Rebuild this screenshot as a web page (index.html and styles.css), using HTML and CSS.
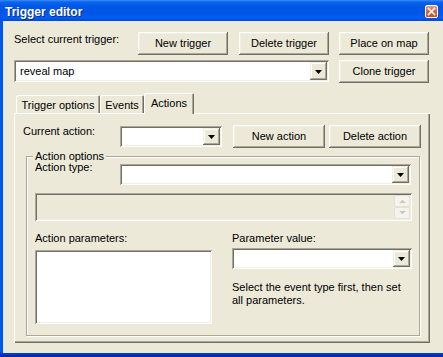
FILE: index.html
```html
<!DOCTYPE html>
<html>
<head>
<meta charset="utf-8">
<link rel="stylesheet" href="styles.css">
</head>
<body>
<div class="window">
  <div class="titlebar">
    <span class="title">Trigger editor</span>
    <span class="close">
      <svg width="11" height="11" viewBox="0 0 11 11"><path d="M2.5 2.5 L8.5 8.5 M8.5 2.5 L2.5 8.5" stroke="#fff" stroke-width="1.6" stroke-linecap="square"/></svg>
    </span>
  </div>
  <div class="client">
    <div class="row row1">
      <span class="label lbl-trigger">Select current trigger:</span>
      <button class="btn btn-90">New trigger</button>
      <button class="btn btn-90 gap11">Delete trigger</button>
      <button class="btn btn-90 gap10">Place on map</button>
    </div>
    <div class="row row2">
      <div class="combo combo-trigger">
        <span class="val">reveal map</span>
        <span class="drop"><svg width="7" height="4" viewBox="0 0 7 4"><path d="M0 0H7L3.5 4Z" fill="#000"/></svg></span>
      </div>
      <button class="btn btn-90 gap10">Clone trigger</button>
    </div>
    <div class="tabs">
      <div class="tab tab1">Trigger options</div>
      <div class="tab tab2">Events</div>
      <div class="tab tab3 active">Actions</div>
    </div>
    <div class="panel">
      <div class="row prow">
        <span class="label lbl-action">Current action:</span>
        <div class="combo combo-action">
          <span class="val"></span>
          <span class="drop"><svg width="7" height="4" viewBox="0 0 7 4"><path d="M0 0H7L3.5 4Z" fill="#000"/></svg></span>
        </div>
        <button class="btn btn-92 gap11">New action</button>
        <button class="btn btn-92 gap4">Delete action</button>
      </div>
      <fieldset class="group">
        <legend>Action options</legend>
        <div class="row grow">
          <span class="label lbl-type">Action type:</span>
          <div class="combo combo-type">
            <span class="val"></span>
            <span class="drop"><svg width="7" height="4" viewBox="0 0 7 4"><path d="M0 0H7L3.5 4Z" fill="#000"/></svg></span>
          </div>
        </div>
        <div class="textbox">
          <div class="spin">
            <span class="spinbtn"><svg width="7" height="4" viewBox="0 0 7 4"><path d="M0 4H7L3.5 1Z" fill="#C9C6B8"/></svg></span>
            <span class="spinbtn"><svg width="7" height="4" viewBox="0 0 7 4"><path d="M0 0H7L3.5 3Z" fill="#C9C6B8"/></svg></span>
          </div>
        </div>
        <div class="cols">
          <div class="col col-left">
            <div class="label">Action parameters:</div>
            <div class="listbox"></div>
          </div>
          <div class="col col-right">
            <div class="label">Parameter value:</div>
            <div class="combo combo-param">
              <span class="val"></span>
              <span class="drop"><svg width="7" height="4" viewBox="0 0 7 4"><path d="M0 0H7L3.5 4Z" fill="#000"/></svg></span>
            </div>
            <div class="help">Select the event type first, then set<br>all parameters.</div>
          </div>
        </div>
      </fieldset>
    </div>
  </div>
</div>
</body>
</html>
```

FILE: styles.css
```css
html, body {
  margin: 0;
  padding: 0;
  background: #0055E5;
}

.window {
  width: 443px;
  height: 357px;
  display: flex;
  flex-direction: column;
  background: linear-gradient(to bottom, #0058E8 0, #0058E8 352px, #0040D0 353px, #0033C0 355px, #00229E 357px);
  font-family: "Liberation Sans", Arial, sans-serif;
  font-size: 11px;
  color: #000;
  overflow: hidden;
}

.titlebar {
  height: 21px;
  flex: none;
  display: flex;
  align-items: flex-start;
  justify-content: space-between;
  background: linear-gradient(to bottom, #3D8DF5 0, #0A64EC 2px, #0057E6 6px, #0055E4 13px, #005EF2 17px, #0058EA 19px, #0044D4 21px);
}

.title {
  color: #fff;
  font-weight: bold;
  font-size: 12px;
  line-height: 14px;
  padding: 5px 0 0 5px;
  text-shadow: 1px 1px 0 #0A2F8A;
}

.close {
  width: 13px;
  height: 13px;
  box-sizing: border-box;
  margin: 5px 5px 0 0;
  border: 1px solid #fff;
  border-radius: 2px;
  background: linear-gradient(to bottom, #EC9A7E 0, #E2643F 45%, #D24A22 100%);
  display: flex;
  align-items: center;
  justify-content: center;
}

.close svg {
  display: block;
}

.client {
  flex: 1;
  margin: 0 0 4px 3px;
  background: #ECE9D8;
  padding: 11px 0 0 11px;
  box-shadow: inset 1px 0 #D9E4FA;
}

.row {
  display: flex;
  align-items: flex-start;
}

.label {
  line-height: 13px;
  white-space: nowrap;
}

.lbl-trigger {
  width: 124px;
  margin-top: 1px;
}

.btn {
  height: 23px;
  padding: 0;
  margin: 0;
  border: none;
  background: #ECE9D8;
  font-family: "Liberation Sans", Arial, sans-serif;
  font-size: 11px;
  color: #000;
  line-height: 13px;
  box-shadow: inset -1px -1px #716F64, inset 1px 1px #FFFFFF, inset -2px -2px #ACA899, inset 2px 2px #F1EFE2;
}

.btn-90 { width: 90px; }
.btn-92 { width: 92px; }
.gap11 { margin-left: 11px; }
.gap10 { margin-left: 10px; }
.gap4 { margin-left: 4px; }

.row2 {
  margin-top: 5px;
}

.combo {
  display: flex;
  background: #fff;
  box-sizing: border-box;
  height: 21px;
  padding: 2px;
  box-shadow: inset 1px 1px #ACA899, inset -1px -1px #FFFFFF, inset 2px 2px #716F64, inset -2px -2px #F1EFE2;
}

.combo .val {
  flex: 1;
  padding-left: 4px;
  line-height: 17px;
}

.combo .drop {
  width: 17px;
  flex: none;
  background: #ECE9D8;
  display: flex;
  align-items: center;
  justify-content: center;
  box-shadow: inset -1px -1px #716F64, inset 1px 1px #F1EFE2, inset -2px -2px #ACA899, inset 2px 2px #FFFFFF;
}

.combo .drop svg {
  display: block;
  margin: 1px 0 0 0;
}

.combo-trigger {
  width: 315px;
  height: 22px;
}

.combo-trigger .val {
  line-height: 18px;
}

.tabs {
  margin-top: 10px;
  padding-left: 2px;
  height: 20px;
  display: flex;
  align-items: flex-end;
}

.tab {
  height: 18px;
  box-sizing: border-box;
  padding-top: 4px;
  line-height: 13px;
  text-align: center;
  background: #ECE9D8;
  box-shadow: inset 1px 1px #FFFFFF, inset -1px 0 #716F64, inset -2px 0 #ACA899;
  border-radius: 2px 2px 0 0;
  white-space: nowrap;
}

.tab1 { width: 84px; }
.tab2 { width: 44px; }
.tab3 { width: 50px; }

.tab.active {
  height: 21px;
  margin-bottom: -1px;
  position: relative;
  z-index: 1;
}

.panel {
  width: 416px;
  height: 230px;
  box-sizing: border-box;
  padding: 12px 0 0 9px;
  background: #ECE9D8;
  box-shadow: inset 1px 1px #FFFFFF, inset -1px -1px #716F64, inset -2px -2px #ACA899;
}

.lbl-action {
  width: 97px;
}

.combo-action {
  width: 102px;
  margin-top: 1px;
}

.group {
  margin: 2px 0 0 3px;
  width: 394px;
  height: 186px;
  box-sizing: border-box;
  padding: 1px 0 0 8px;
  border: 1px solid #ACA899;
  box-shadow: inset 1px 1px #FFFFFF, 1px 1px #FFFFFF;
  min-width: 0;
}

.group legend {
  padding: 0 2px;
  margin-left: -2px;
  line-height: 13px;
  background: #ECE9D8;
}

.lbl-type {
  width: 85px;
  margin-top: -3px;
}

.combo-type {
  width: 291px;
}

.textbox {
  margin-top: 8px;
  width: 377px;
  height: 28px;
  box-sizing: border-box;
  padding: 2px;
  display: flex;
  justify-content: flex-end;
  background: #ECE9D8;
  box-shadow: inset 1px 1px #ACA899, inset -1px -1px #FFFFFF, inset 2px 2px #716F64, inset -2px -2px #F1EFE2;
}

.spin {
  width: 16px;
  display: flex;
  flex-direction: column;
}

.spinbtn {
  height: 12px;
  box-sizing: border-box;
  border: 1px solid #E4E2D6;
  border-radius: 2px;
  background: #F4F3EE;
  display: flex;
  align-items: center;
  justify-content: center;
}

.spinbtn svg {
  display: block;
}

.cols {
  margin-top: 11px;
  display: flex;
  gap: 20px;
}

.col-left { width: 177px; }
.col-right { width: 180px; }

.listbox {
  margin-top: 5px;
  height: 74px;
  background: #fff;
  box-shadow: inset 1px 1px #ACA899, inset -1px -1px #FFFFFF, inset 2px 2px #716F64, inset -2px -2px #F1EFE2;
}

.combo-param {
  margin-top: 3px;
  width: 180px;
}

.help {
  margin-top: 12px;
  line-height: 13px;
  white-space: nowrap;
}
```
